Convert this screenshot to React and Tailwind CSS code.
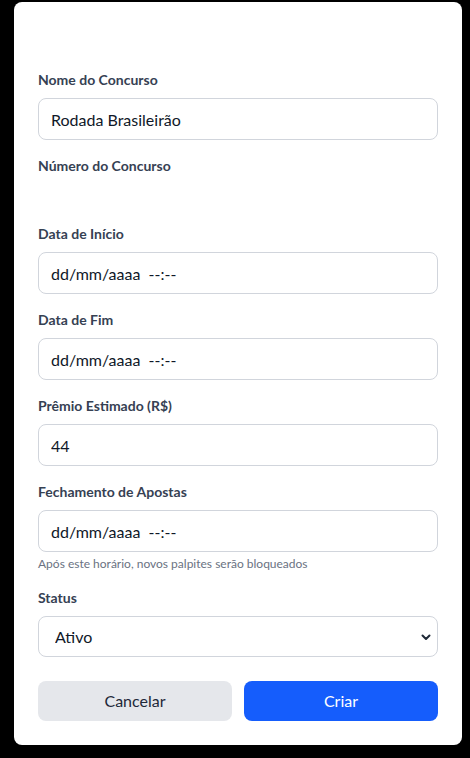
import React from 'react';

const font = { fontFamily: 'Lato, "Noto Sans", sans-serif' };

function Label({ children }) {
  return <label className="block text-sm font-bold leading-5 text-gray-700 mb-2">{children}</label>;
}

function Field({ label, value, children }) {
  return (
    <div>
      <Label>{label}</Label>
      {children || (
        <input
          type="text"
          readOnly
          defaultValue={value}
          className="block w-full h-[42px] px-3 border border-gray-300 rounded-lg text-base leading-6 text-gray-900 bg-white outline-none whitespace-pre"
        />
      )}
    </div>
  );
}

export default function App() {
  return (
    <div className="min-h-[758px] bg-black pt-[2px] pl-[14px]" style={font}>
      <div className="w-[448px] bg-white rounded-lg p-6">
        {/* empty title area */}
        <div className="h-11" />

        <form className="space-y-4">
          <Field label="Nome do Concurso" value="Rodada Brasileirão" />

          <div>
            <Label>Número do Concurso</Label>
            <div className="h-6" />
          </div>

          <Field label="Data de Início" value="dd/mm/aaaa  --:--" />
          <Field label="Data de Fim" value="dd/mm/aaaa  --:--" />
          <Field label="Prêmio Estimado (R$)" value="44" />

          <div>
            <Field label="Fechamento de Apostas" value="dd/mm/aaaa  --:--" />
            <p className="mt-1 text-xs leading-4 text-gray-500">Após este horário, novos palpites serão bloqueados</p>
          </div>

          <Field label="Status">
            <div className="relative">
              <select
                defaultValue="ativo"
                className="block w-full h-[41px] pl-4 pr-8 border border-gray-300 rounded-lg text-base text-gray-900 bg-white appearance-none outline-none"
              >
                <option value="ativo">Ativo</option>
                <option value="inativo">Inativo</option>
              </select>
              <svg
                className="absolute right-[6px] top-1/2 -translate-y-1/2 pointer-events-none"
                width="12"
                height="12"
                viewBox="0 0 12 12"
                fill="none"
              >
                <path d="M2.5 4.5L6 8l3.5-3.5" stroke="#1f2937" strokeWidth="2" strokeLinecap="round" strokeLinejoin="round" />
              </svg>
            </div>
          </Field>

          <div className="flex gap-3 pt-2">
            <button type="button" className="flex-1 h-10 rounded-lg bg-gray-200 text-base text-gray-800">
              Cancelar
            </button>
            <button type="button" className="flex-1 h-10 rounded-lg bg-blue-600 text-base text-white">
              Criar
            </button>
          </div>
        </form>
      </div>
    </div>
  );
}
